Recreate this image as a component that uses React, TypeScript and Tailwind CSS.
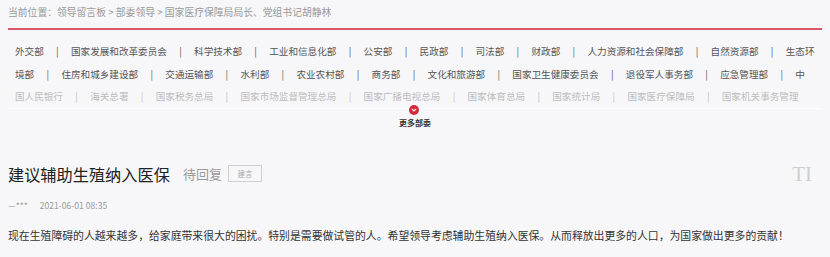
import React from "react";

const row1 = ["外交部", "国家发展和改革委员会", "科学技术部", "工业和信息化部", "公安部", "民政部", "司法部", "财政部", "人力资源和社会保障部", "自然资源部", "生态环"];
const row2 = ["境部", "住房和城乡建设部", "交通运输部", "水利部", "农业农村部", "商务部", "文化和旅游部", "国家卫生健康委员会", "退役军人事务部", "应急管理部", "中"];
const row3 = ["国人民银行", "海关总署", "国家税务总局", "国家市场监督管理总局", "国家广播电视总局", "国家体育总局", "国家统计局", "国家医疗保障局", "国家机关事务管理"];

function Row({ items, faded }: { items: string[]; faded?: boolean }) {
  return (
    <div className={`flex h-[22.5px] items-center whitespace-nowrap overflow-hidden ${faded ? "text-[#bdbdbd]" : "text-[#555]"}`}>
      {items.map((t, i) => (
        <React.Fragment key={i}>
          {i > 0 && <span className="mx-[12.3px]">|</span>}
          <span>{t}</span>
        </React.Fragment>
      ))}
    </div>
  );
}

export default function App() {
  return (
    <div
      className="w-[830px] h-[257px] bg-[#f7f7f9] overflow-hidden"
      style={{ fontFamily: '"Noto Sans CJK SC", "Noto Sans", sans-serif' }}
    >
      <div className="h-[28px] pl-[8px] leading-[24px] text-[9.8px] text-[#9a9a9a]">
        当前位置：领导留言板 &gt; 部委领导 &gt; 国家医疗保障局局长、党组书记胡静林
      </div>
      <div className="ml-[8px] w-[814px] h-[2px] bg-[#d6566a]" />
      <div className="mt-[10px] ml-[15px] w-[807px] text-[9.6px]">
        <Row items={row1} />
        <Row items={row2} />
        <Row items={row3} faded />
      </div>
      <div className="ml-[8px] w-[814px] h-[1px] bg-[#fdfdfd]" />
      <div className="flex flex-col items-center w-[830px] -mt-[4px]">
        <div className="w-[10px] h-[10px] rounded-full bg-[#d9263b] flex items-center justify-center ml-[-2px]">
          <svg width="6" height="4" viewBox="0 0 6 4">
            <path d="M0.8 0.8 L3 3 L5.2 0.8" stroke="#fff" strokeWidth="1.2" fill="none" />
          </svg>
        </div>
        <div className="mt-[3px] text-[8px] font-bold text-[#333] leading-[10px]">更多部委</div>
      </div>
      <div className="flex items-center justify-between pl-[8px] pr-[18px] mt-[34px] h-[24px]">
        <div className="flex items-center">
          <span className="text-[16.2px] text-[#222] leading-[24px]">建议辅助生殖纳入医保</span>
          <span className="ml-[13px] text-[13px] text-[#9a9a9a] leading-[24px]">待回复</span>
          <span className="ml-[6px] w-[34px] h-[17px] border border-[#cfcfcf] text-[7.5px] text-[#aaa] flex items-center justify-center">建言</span>
        </div>
        <span
          className="text-[21px] text-[#cfcfcf] leading-[24px]"
          style={{ fontFamily: '"Liberation Serif", serif' }}
        >
          TI
        </span>
      </div>
      <div className="flex items-center pl-[8px] mt-[13px] h-[14px] text-[8.6px] text-[#9a9a9a]">
        <span>—***</span>
        <span className="ml-[12px]">2021-06-01 08:35</span>
      </div>
      <div className="pl-[8px] mt-[15px] text-[10.85px] leading-[14px] text-[#333] whitespace-nowrap">
        现在生殖障碍的人越来越多，给家庭带来很大的困扰。特别是需要做试管的人。希望领导考虑辅助生殖纳入医保。从而释放出更多的人口，为国家做出更多的贡献！
      </div>
    </div>
  );
}
